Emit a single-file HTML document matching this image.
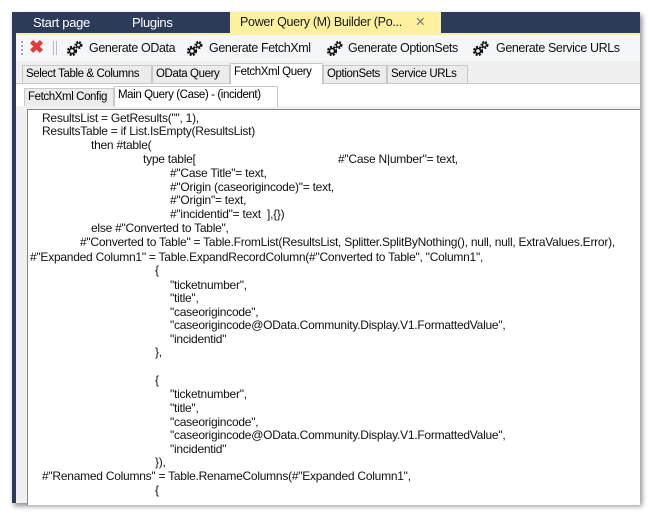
<!DOCTYPE html>
<html><head><style>
*{margin:0;padding:0;box-sizing:border-box}
body{width:650px;height:514px;background:#fff;position:relative;overflow:hidden;font-family:"Liberation Sans",sans-serif}
#win{position:absolute;left:12px;top:12px;width:628px;height:491px;background:#2b3b58;box-shadow:2px 3px 5px rgba(0,0,0,.45)}
.tb{position:absolute;top:0;height:20px;color:#fff;font-size:13px;line-height:21px;letter-spacing:-0.3px}
#act{position:absolute;left:218px;top:0;width:211px;height:22px;background:#fdf1a0;color:#1a1a1a;font-size:12.5px;line-height:21px;padding-left:10px;letter-spacing:-0.3px}
#panel{position:absolute;left:4px;top:21px;width:624px;height:470px;background:#f0f0f0;border-top:2px solid #fdf1a0}
#tool{position:absolute;left:0;top:0;width:624px;height:26px;background:#f5f6f7;font-size:12.5px;color:#111;letter-spacing:-0.4px}
.g{position:absolute;top:5px}
.tabs{position:absolute;left:0;height:20px;font-size:11.5px;letter-spacing:-0.4px}
.tab{position:absolute;top:2px;height:18px;border:1px solid #c8c8c8;border-bottom:none;background:#ececec;padding:0 3px;line-height:17px;white-space:nowrap;overflow:hidden}
.tab.on{top:0;height:21px;background:#fff;z-index:2}
#box{position:absolute;left:11px;top:74px;width:613px;height:396px;background:#fff;border:1px solid #828790;border-right:none;border-bottom:none;overflow:hidden}
.l{position:absolute;font-size:12px;white-space:pre;letter-spacing:-0.25px;color:#111}
</style></head><body>
<svg width="0" height="0" style="position:absolute"><defs>
<g id="gear"><circle cx="6" cy="11" r="3.6" fill="none" stroke="#111" stroke-width="3" stroke-dasharray="1.8 1.2"/><circle cx="6" cy="11" r="2.6" fill="none" stroke="#111" stroke-width="1.6"/><circle cx="12.5" cy="5" r="2.8" fill="none" stroke="#111" stroke-width="2.4" stroke-dasharray="1.6 1.1"/><circle cx="12.5" cy="5" r="2" fill="none" stroke="#111" stroke-width="1.3"/></g>
</defs></svg>
<div id="win">
 <div class="tb" style="left:21px">Start page</div>
 <div class="tb" style="left:120px">Plugins</div>
 <div id="act">Power Query (M) Builder (Po... <span style="color:#777;margin-left:10px">✕</span></div>
 <div id="panel">
  <div id="tool">
   <div style="position:absolute;left:5px;top:6px;width:2px;height:14px;border-left:2px dotted #aaa"></div>
   <div style="position:absolute;left:13px;top:2px;color:#e23b3b;font-size:18px;font-weight:bold">✖</div>
   <div style="position:absolute;left:37px;top:6px;width:1px;height:14px;background:#bbb"></div>
   <div style="position:absolute;left:40px;top:6px;width:1px;height:14px;background:#bbb"></div>
   <svg class="g" style="left:50px" width="17" height="16"><use href="#gear"/></svg><span style="position:absolute;left:73px;top:6px">Generate OData</span>
   <svg class="g" style="left:170px" width="17" height="16"><use href="#gear"/></svg><span style="position:absolute;left:193px;top:6px">Generate FetchXml</span>
   <svg class="g" style="left:310px" width="17" height="16"><use href="#gear"/></svg><span style="position:absolute;left:332px;top:6px">Generate OptionSets</span>
   <svg class="g" style="left:456px" width="17" height="16"><use href="#gear"/></svg><span style="position:absolute;left:480px;top:6px">Generate Service URLs</span>
  </div>
  <div class="tabs" style="top:28px;width:624px">
   <div class="tab" style="left:6px;width:130px">Select Table &amp; Columns</div>
   <div class="tab" style="left:136px;width:78px">OData Query</div>
   <div class="tab on" style="left:214px;width:93px">FetchXml Query</div>
   <div class="tab" style="left:307px;width:64px">OptionSets</div>
   <div class="tab" style="left:371px;width:81px">Service URLs</div>
   <div style="position:absolute;left:0;top:20px;width:624px;height:23px;background:#fff;border-top:1px solid #c8c8c8"></div>
  </div>
  <div class="tabs" style="top:51px">
   <div class="tab" style="left:8px;width:90px">FetchXml Config</div>
   <div class="tab on" style="left:98px;width:164px">Main Query (Case) - (incident)</div>
  </div>
  <div id="box"></div>
 </div>
</div>
<div id="code">
<div class="l" style="left:42px;top:111px">ResultsList = GetResults("", 1),</div>
<div class="l" style="left:42px;top:124px">ResultsTable = if List.IsEmpty(ResultsList)</div>
<div class="l" style="left:91px;top:138px">then #table(</div>
<div class="l" style="left:143px;top:152px">type table[</div>
<div class="l" style="left:338px;top:152px">#"Case N|umber"= text,</div>
<div class="l" style="left:170px;top:166px">#"Case Title"= text,</div>
<div class="l" style="left:170px;top:180px">#"Origin (caseorigincode)"= text,</div>
<div class="l" style="left:170px;top:193px">#"Origin"= text,</div>
<div class="l" style="left:170px;top:207px">#"incidentid"= text  ],{})</div>
<div class="l" style="left:91px;top:221px">else #"Converted to Table",</div>
<div class="l" style="left:80px;top:235px">#"Converted to Table" = Table.FromList(ResultsList, Splitter.SplitByNothing(), null, null, ExtraValues.Error),</div>
<div class="l" style="left:30px;top:250px">#"Expanded Column1" = Table.ExpandRecordColumn(#"Converted to Table", "Column1",</div>
<div class="l" style="left:155px;top:263px">{</div>
<div class="l" style="left:170px;top:278px">"ticketnumber",</div>
<div class="l" style="left:170px;top:291px">"title",</div>
<div class="l" style="left:170px;top:305px">"caseorigincode",</div>
<div class="l" style="left:170px;top:318px">"caseorigincode@OData.Community.Display.V1.FormattedValue",</div>
<div class="l" style="left:170px;top:332px">"incidentid"</div>
<div class="l" style="left:155px;top:345px">},</div>
<div class="l" style="left:155px;top:373px">{</div>
<div class="l" style="left:170px;top:387px">"ticketnumber",</div>
<div class="l" style="left:170px;top:401px">"title",</div>
<div class="l" style="left:170px;top:415px">"caseorigincode",</div>
<div class="l" style="left:170px;top:428px">"caseorigincode@OData.Community.Display.V1.FormattedValue",</div>
<div class="l" style="left:170px;top:442px">"incidentid"</div>
<div class="l" style="left:155px;top:455px">}),</div>
<div class="l" style="left:42px;top:469px">#"Renamed Columns" = Table.RenameColumns(#"Expanded Column1",</div>
<div class="l" style="left:155px;top:483px">{</div>
</div>
</body></html>
